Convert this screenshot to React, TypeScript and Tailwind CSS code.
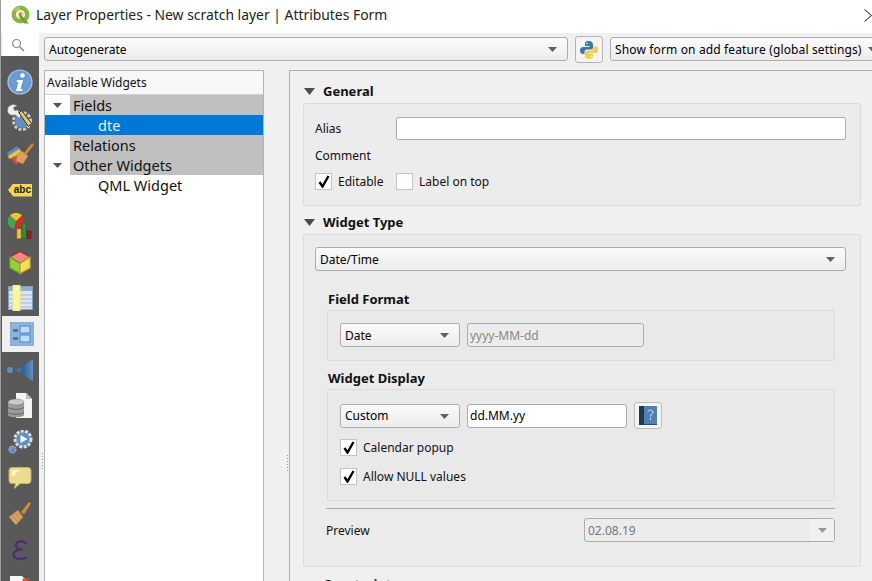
import type { ReactNode } from "react";

const font = "font-['Noto_Sans','Liberation_Sans',sans-serif]";

function Arrow({ className = "", w = 9, h = 5, color = "#606060" }: { className?: string; w?: number; h?: number; color?: string }) {
  return (
    <svg width={w} height={h} viewBox={`0 0 ${w} ${h}`} className={className}>
      <path d={`M0 0h${w}L${w / 2} ${h}z`} fill={color} />
    </svg>
  );
}

function Grip({ className = "" }: { className?: string }) {
  return (
    <div className={`flex w-[1px] flex-col gap-[2px] ${className}`}>
      {[0, 1, 2, 3, 4, 5].map((i) => (
        <div key={i} className="h-[1px] w-[1px] bg-[#9a9a9a]" />
      ))}
    </div>
  );
}

function QgisLogo() {
  return (
    <svg width="20" height="20" viewBox="0 0 20 20">
      <circle cx="9.500" cy="9.500" r="6.800" fill="#f6efe0" stroke="#86b83f" strokeWidth="4.400" />
      <path d="M3 5a7.500 7.500 0 0 1 6-3.500v3.500a4.500 4.500 0 0 0-3 1.800z" fill="#a9cd62" />
      <path d="M10 10l8 8.500h-4.500l-5.500-6.500z" fill="#6f9f2f" />
      <circle cx="9.500" cy="9" r="2.200" fill="#eaa13a" />
      <circle cx="9" cy="10" r="1" fill="#d2553a" />
    </svg>
  );
}

function SearchIcon() {
  return (
    <svg width="14" height="14" viewBox="0 0 14 14" fill="none" stroke="#8a8a8a" strokeWidth="1.200">
      <circle cx="5.500" cy="5.500" r="4" />
      <path d="M8.500 8.500l4.500 4.500" strokeWidth="1.500" />
    </svg>
  );
}

function InfoIcon() {
  return (
    <svg width="26" height="26" viewBox="0 0 26 26">
      <circle cx="13" cy="13" r="12" fill="#6b9bd2" stroke="#a9c4e6" strokeWidth="1.200" />
      <circle cx="15.500" cy="6.500" r="2.200" fill="#fff" />
      <path d="M10 11h6l-2.500 9h2l-.5 2H9l2.500-9h-2z" fill="#fff" />
    </svg>
  );
}

function WrenchIcon() {
  return (
    <svg width="26" height="28" viewBox="0 0 26 28">
      <circle cx="15" cy="17" r="8.500" fill="none" stroke="#c9c9c9" strokeWidth="3" strokeDasharray="3 1.600" />
      <circle cx="15" cy="17" r="7" fill="#5f8fc4" />
      <path d="M1 3.500a6 6 0 0 1 9-1.500l-3.500 1.500 1 3 3.500-.5c.5 1 .5 2 .5 2.500l3 3-2.500 2.500-3.500-3.500c-3 1.500-7 .5-8-3z" fill="#eeeeee" stroke="#777" strokeWidth=".5" />
      <path d="M12 9l2.500-2.500 10 13-3 3z" fill="#e9cc52" stroke="#2e2e2e" strokeWidth="1" />
    </svg>
  );
}

function PaintIcon() {
  return (
    <svg width="27" height="24" viewBox="0 0 27 24">
      <path d="M1 13L12 8l4 9-7 6z" fill="#d8483a" />
      <path d="M1 13L12 6l3 5-13 6z" fill="#e8c63c" />
      <path d="M0 11L10 4l2 3L1 14z" fill="#5d84c4" />
      <path d="M10 13l5-4 6 5-5 8-7-3z" fill="#d9a066" stroke="#a8743e" strokeWidth=".6" />
      <path d="M17 11l8-10 2 1.500-8 10.500z" fill="#d08a35" />
    </svg>
  );
}

function AbcIcon() {
  return (
    <div className="flex h-[13px] w-[24px] items-center justify-end bg-[#f4d94e] pr-[1px] [clip-path:polygon(22%_0,100%_0,100%_100%,22%_100%,0_50%)]">
      <span className="font-['Liberation_Sans',sans-serif] text-[10px] leading-none font-bold text-[#222]">abc</span>
    </div>
  );
}

function ChartIcon() {
  return (
    <svg width="24" height="26" viewBox="0 0 24 26">
      <circle cx="8" cy="8" r="8" fill="#c9302a" />
      <path d="M8 8L2 2.500a8 8 0 0 1 12 0z" fill="#f1c232" />
      <path d="M8 8L2 2.500A8 8 0 0 0 6 16z" fill="#3ea655" />
      <rect x="9" y="16" width="4" height="9.500" fill="#f2c42c" stroke="#b28a10" strokeWidth=".5" />
      <rect x="14" y="10" width="4" height="15.500" fill="#2f8f43" stroke="#1a5f2a" strokeWidth=".5" />
      <rect x="19" y="18" width="4" height="7.500" fill="#9c1c1c" stroke="#5e0e0e" strokeWidth=".5" />
    </svg>
  );
}

function CubeIcon() {
  return (
    <svg width="24" height="27" viewBox="0 0 26 28" strokeWidth="1.200">
      <path d="M13 2l11 6-11 7L2 8z" fill="#f08a80" stroke="#a52a20" />
      <path d="M2 8l11 7v11L2 20z" fill="#93d13c" stroke="#6c9a26" />
      <path d="M24 8l-11 7v11l11-6z" fill="#f6dc5a" stroke="#b89f2a" />
    </svg>
  );
}

function TableIcon() {
  return (
    <svg width="25" height="26" viewBox="0 0 25 26">
      <rect x=".5" y="1.500" width="24" height="23" fill="#dbe6f2" stroke="#7ea1c8" />
      <rect x="1" y="2" width="23" height="4" fill="#8fb1d7" />
      <path d="M1 10h23M1 14h23M1 18h23M1 22h23" stroke="#9ab8d8" />
      <rect x="5" y="0" width="7" height="26" fill="#fdf4a0" stroke="#f7ea6a" />
      <rect x="7.500" y="3" width="2" height="2" fill="#fff" />
    </svg>
  );
}

function FormIcon() {
  return (
    <svg width="24" height="24" viewBox="0 0 24 24" className="ml-[3px]">
      <rect x=".5" y=".5" width="23" height="23" fill="#8fb4dc" stroke="#6e97c6" strokeDasharray="2 1" />
      <rect x="3" y="7" width="5" height="3" fill="#4f76a8" />
      <rect x="3" y="15" width="5" height="3" fill="#4f76a8" />
      <rect x="10" y="4" width="10" height="7" fill="#bcdcf5" stroke="#4f86c4" />
      <rect x="10" y="13" width="10" height="7" fill="#bcdcf5" stroke="#4f86c4" />
    </svg>
  );
}

function DiagramIcon() {
  return (
    <svg width="28" height="22" viewBox="0 0 28 22" className="ml-[1px]">
      <defs>
        <linearGradient id="cone" x1="0" x2="1" y1="0" y2="0">
          <stop offset="0" stopColor="#4f81b8" />
          <stop offset=".4" stopColor="#35618f" />
          <stop offset="1" stopColor="#5f90c8" />
        </linearGradient>
      </defs>
      <circle cx="3" cy="11" r="3" fill="#5c8fc6" />
      <path d="M9 11L26 0v22z" fill="url(#cone)" />
    </svg>
  );
}

function DatabaseIcon() {
  return (
    <svg width="26" height="26" viewBox="0 0 26 26">
      <path d="M9 0h10l6 6v19H9z" fill="#f4f4f4" />
      <path d="M19 0v6h6z" fill="#bdbdbd" />
      <path d="M1 9v13c0 3 16 3 16 0V9z" fill="#9a9a9a" />
      <ellipse cx="9" cy="9" rx="8" ry="3" fill="#c9c9c9" stroke="#777" strokeWidth=".5" />
      <path d="M1 14c0 3 16 3 16 0M1 19c0 3 16 3 16 0" fill="none" stroke="#666" />
    </svg>
  );
}

function GearPlayIcon() {
  return (
    <svg width="26" height="24" viewBox="0 0 26 24" className="ml-[1px]">
      <circle cx="4.500" cy="19.500" r="3.500" fill="#5f8fc4" stroke="#b8c8d8" strokeDasharray="1.500 .8" />
      <circle cx="15" cy="9" r="8" fill="#5f8fc4" stroke="#dcdcdc" strokeWidth="3" strokeDasharray="3 1.400" />
      <circle cx="15" cy="9" r="5.500" fill="#5f8fc4" />
      <path d="M12.500 5l7 4-7 4z" fill="#fff" />
    </svg>
  );
}

function BubbleIcon() {
  return (
    <svg width="24" height="22" viewBox="0 0 24 22">
      <path d="M4 .5h16a3 3 0 0 1 3 3v10a3 3 0 0 1-3 3H12l-5.500 5 1-5H4a3 3 0 0 1-3-3v-10a3 3 0 0 1 3-3z" fill="#ecdc90" stroke="#c8b155" />
      <path d="M5 3h8c-3 1-6 3-6 6H3.500V4.500z" fill="#fbf5cf" />
    </svg>
  );
}

function BroomIcon() {
  return (
    <svg width="24" height="24" viewBox="0 0 24 24">
      <path d="M10 8l-9 7 7 8 7-8z" fill="#d8a25f" stroke="#b07a3c" strokeWidth=".6" />
      <path d="M4 13l6 7M7 11l5.500 6.500M9 9.500l5 5" stroke="#b07a3c" strokeWidth=".7" />
      <path d="M13 10l8-10 2 1.500-7 11z" fill="#d08a35" />
    </svg>
  );
}

function EpsilonIcon() {
  return (
    <svg width="16" height="21" viewBox="0 0 16 21" fill="none" stroke="#4f2a7c" strokeWidth="2.200">
      <path d="M14.500 3.500C12 .5 4 .5 4 5c0 3 3 4.500 6.500 4.500C5.500 9.500 1.500 11 1.500 14.500c0 5 9.500 6 13 2.500" />
    </svg>
  );
}

function DocIcon() {
  return (
    <svg width="24" height="24" viewBox="0 0 24 24">
      <path d="M2 2h12l6 6v16H2z" fill="#f8f8f8" />
      <path d="M15 5l6 6M21 4l-6 6" stroke="#d84a26" strokeWidth="2.400" />
    </svg>
  );
}

function PythonIcon() {
  return (
    <svg width="18" height="18" viewBox="0 0 18 18">
      <path d="M9 0C5 0 5 2 5 3v2h4.500v1H3C1 6 0 7.500 0 9.500S1 13 3 13h1.500v-2c0-1.500 1-2.500 2.500-2.500h4c1.200 0 2-1 2-2V3c0-1.500-2-3-4-3z" fill="#3d78aa" />
      <path d="M9 18c4 0 4-2 4-3v-2H8.500v-1H15c2 0 3-1.500 3-3.500S17 5 15 5h-1.500v2c0 1.500-1 2.500-2.500 2.500H7c-1.200 0-2 1-2 2V15c0 1.500 2 3 4 3z" fill="#f7cf45" />
      <circle cx="7" cy="2.500" r=".8" fill="#fff" />
      <circle cx="11" cy="15.500" r=".8" fill="#fff" />
    </svg>
  );
}

function HelpBookIcon() {
  return (
    <svg width="18" height="19" viewBox="0 0 18 19">
      <rect x="0" y="0" width="18" height="19" fill="#4f7fb3" />
      <rect x="0" y="0" width="5" height="19" fill="#22384f" />
      <path d="M5 18h13v1H5z" fill="#2f4c6b" />
      <path d="M9 6c0-2.500 5-2.500 5 0 0 2-2.500 2-2.500 4.500M11.500 12v2" fill="none" stroke="#dfe9f3" strokeWidth="1" />
    </svg>
  );
}

function Combo({ label, className = "", arrowClass = "right-[10px]" }: { label: string; className?: string; arrowClass?: string }) {
  return (
    <div className={`relative flex h-[24px] shrink-0 items-center rounded-[3px] border border-[#adadad] bg-gradient-to-b from-[#fbfbfb] to-[#ececec] pt-[1px] pl-[4px] text-[12px] whitespace-nowrap text-black ${className}`}>
      {label}
      <Arrow className={`absolute top-[9px] ${arrowClass}`} />
    </div>
  );
}

function CheckRow({ label, checked = true, className = "" }: { label: string; checked?: boolean; className?: string }) {
  return (
    <div className={`flex h-[17px] items-center gap-[6px] text-[12px] text-[#111] ${className}`}>
      <div className="flex size-[17px] items-center justify-center border border-[#c4c4c4] bg-white">
        {checked && (
          <svg width="12" height="13" viewBox="0 0 12 13">
            <path d="M1.500 7L4.500 11.500 10.500 1" fill="none" stroke="#000" strokeWidth="2.400" />
          </svg>
        )}
      </div>
      <span className="pt-[1px] leading-[16px]">{label}</span>
    </div>
  );
}

function SectionHead({ label, className = "" }: { label: string; className?: string }) {
  return (
    <div className={`flex h-[16px] items-center ${className}`}>
      <Arrow w={11} h={7} color="#4d4d4d" className="mr-[8px] ml-[1px]" />
      <span className="pt-[1px] text-[13px] font-bold text-[#111]">{label}</span>
    </div>
  );
}

function Group({ className = "", children }: { className?: string; children: ReactNode }) {
  return <div className={`rounded-[2px] border border-[#dcdcdc] ${className}`}>{children}</div>;
}

const railIcons = [
  <InfoIcon />,
  <WrenchIcon />,
  <PaintIcon />,
  <AbcIcon />,
  <ChartIcon />,
  <CubeIcon />,
  <TableIcon />,
  <FormIcon />,
  <DiagramIcon />,
  <DatabaseIcon />,
  <GearPlayIcon />,
  <BubbleIcon />,
  <BroomIcon />,
  <EpsilonIcon />,
  <DocIcon />,
];

function Rail() {
  return (
    <div className="flex w-[38px] shrink-0 flex-col pl-[2px]">
      <div className="flex h-[23px] items-center justify-center rounded-t-[2px] bg-white pr-[6px]">
        <SearchIcon />
      </div>
      <div className="-ml-[2px] flex-1 overflow-hidden bg-[#595959] pt-[8px]">
        {railIcons.map((icon, i) => (
          <div key={i} className={`flex h-[36px] items-center justify-center ${i === 7 ? "ml-[1px] bg-[#f0f0f0]" : ""}`}>
            {icon}
          </div>
        ))}
      </div>
    </div>
  );
}

function TreeRow({ label, indent, arrow, grey, selected }: { label: string; indent: number; arrow?: boolean; grey?: boolean; selected?: boolean }) {
  return (
    <div className={`relative flex h-[20px] items-center text-[14.500px] ${selected ? "bg-[#0078d7] text-[#e8f2fc]" : "text-[#111]"}`}>
      {arrow && <Arrow color="#555555" className="absolute top-[8px] left-[8px]" />}
      <div className={`flex h-full flex-1 items-center pt-[2px] ${indent === 1 ? "ml-[25px] pl-[3px]" : "ml-[53px]"} ${grey ? "bg-[#c0c0c0]" : ""}`}>{label}</div>
    </div>
  );
}

function WidgetTree() {
  return (
    <div className="flex h-full w-[220px] shrink-0 flex-col border border-b-0 border-[#b4b4b4] bg-white">
      <div className="flex h-[24px] shrink-0 items-center border-b border-[#d0d0d0] bg-[#f7f7f7] pt-[1px] pl-[2px] text-[12px] text-[#111]">Available Widgets</div>
      <TreeRow label="Fields" indent={1} arrow grey />
      <TreeRow label="dte" indent={2} selected />
      <TreeRow label="Relations" indent={1} grey />
      <TreeRow label="Other Widgets" indent={1} arrow grey />
      <TreeRow label="QML Widget" indent={2} />
    </div>
  );
}

function PropertiesPanel() {
  return (
    <div className="h-full flex-1 overflow-hidden border-t border-l border-[#b0b0b0] pt-[12px] pl-[13px]">
      <div className="w-[558px] text-[12px] text-[#111]">
        <SectionHead label="General" />
        <Group className="mt-[4px] h-[103px] bg-[#ececec] px-[11px] pt-[13px]">
          <div className="flex h-[23px] items-center">
            <span className="w-[81px]">Alias</span>
            <div className="h-full w-[450px] rounded-[2px] border border-[#adadad] bg-white" />
          </div>
          <div className="mt-[8px] h-[16px] leading-[16px]">Comment</div>
          <div className="mt-[9px] flex">
            <CheckRow label="Editable" className="w-[81px]" />
            <CheckRow label="Label on top" checked={false} />
          </div>
        </Group>
        <SectionHead label="Widget Type" className="mt-[8px]" />
        <Group className="mt-[4px] h-[333px] bg-[#ebebeb] pt-[12px] pl-[11px]">
          <Combo label="Date/Time" className="w-[531px]" arrowClass="right-[10px]" />
          <div className="mt-[20px] ml-[13px] h-[16px] text-[13px] leading-[16px] font-bold">Field Format</div>
          <Group className="mt-[3px] ml-[12px] flex h-[51px] w-[508px] gap-[7px] bg-[#e9e9e9] pt-[12px] pl-[12px]">
            <Combo label="Date" className="w-[120px]" />
            <div className="flex h-[24px] w-[177px] items-center rounded-[3px] border border-[#adadad] bg-[#ececec] pt-[1px] pl-[2px] text-[#888]">yyyy-MM-dd</div>
          </Group>
          <div className="mt-[9px] ml-[13px] h-[16px] text-[13px] leading-[16px] font-bold">Widget Display</div>
          <Group className="mt-[3px] ml-[12px] h-[112px] w-[508px] bg-[#e9e9e9] pt-[12px] pl-[12px]">
            <div className="flex items-center gap-[7px]">
              <Combo label="Custom" className="w-[120px]" />
              <div className="flex h-[24px] w-[160px] items-center rounded-[3px] border border-[#adadad] bg-white pl-[2px] text-black">dd.MM.yy</div>
              <div className="flex h-[27px] w-[28px] items-center justify-center rounded-[3px] border border-[#bcbcbc] bg-[#f4f4f4]">
                <HelpBookIcon />
              </div>
            </div>
            <div className="mt-[10px]">
              <CheckRow label="Calendar popup" />
            </div>
            <div className="mt-[12px]">
              <CheckRow label="Allow NULL values" />
            </div>
          </Group>
          <div className="mt-[7px] ml-[11px] h-[1px] w-[509px] bg-[#a8a8a8]" />
          <div className="mt-[9px] ml-[11px] flex w-[509px] items-center justify-between">
            <span className="pt-[1px]">Preview</span>
            <div className="relative flex h-[24px] w-[251px] items-center rounded-[3px] border border-[#adadad] bg-[#ececec] pt-[1px] pl-[3px] text-[#777]">
              02.08.19
              <div className="absolute top-0 right-0 flex h-full w-[24px] items-center justify-center bg-[#f0f0f0]">
                <Arrow color="#9a9a9a" />
              </div>
            </div>
          </div>
        </Group>
        <div className="mt-[9px] pl-[20px] text-[13px] leading-[16px] font-bold">Constraints</div>
      </div>
    </div>
  );
}

export default function App() {
  return (
    <div className={`flex h-[581px] w-[872px] flex-col overflow-hidden border-l border-[#9c9c9c] bg-[#f0f0f0] ${font}`}>
      <div className="flex h-[33px] shrink-0 items-center bg-white pb-[3px] pl-[10px]">
        <QgisLogo />
        <span className="ml-[5px] text-[13.900px] text-[#222]">Layer Properties - New scratch layer | Attributes Form</span>
        <svg width="8" height="13" viewBox="0 0 8 13" className="ml-auto" fill="none" stroke="#111">
          <path d="M.5 .5l7 6-7 6" />
        </svg>
      </div>
      <div className="flex min-h-0 flex-1">
        <Rail />
        <Grip className="mt-[420px] ml-[3px]" />
        <div className="flex min-w-0 flex-1 flex-col pl-[1px]">
          <div className="flex h-[37px] shrink-0 items-start gap-[7px] pt-[4px]">
            <Combo label="Autogenerate" className="w-[524px]" arrowClass="right-[10px]" />
            <div className="flex h-[27px] w-[28px] shrink-0 -translate-y-[1px] items-center justify-center rounded-[3px] border border-[#b4b4b4] bg-[#f4f4f4]">
              <PythonIcon />
            </div>
            <Combo label="Show form on add feature (global settings)" className="w-[270px] tracking-[0.14px]" arrowClass="right-[2px]" />
          </div>
          <div className="flex min-h-0 flex-1">
            <WidgetTree />
            <div className="flex w-[25px] shrink-0 justify-end pr-[1px]">
              <Grip className="mt-[385px]" />
            </div>
            <PropertiesPanel />
          </div>
        </div>
      </div>
    </div>
  );
}
